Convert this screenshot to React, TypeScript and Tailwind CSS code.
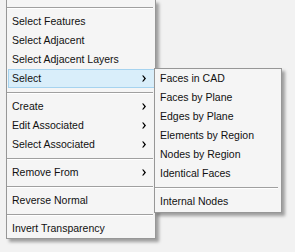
import React from 'react';

type Item = { label?: string; sub?: boolean; active?: boolean; sep?: boolean };

const mainItems: Item[] = [
    { sep: true },
    { label: 'Select Features' },
    { label: 'Select Adjacent' },
    { label: 'Select Adjacent Layers' },
    { label: 'Select', sub: true, active: true },
    { sep: true },
    { label: 'Create', sub: true },
    { label: 'Edit Associated', sub: true },
    { label: 'Select Associated', sub: true },
    { sep: true },
    { label: 'Remove From', sub: true },
    { sep: true },
    { label: 'Reverse Normal' },
    { sep: true },
    { label: 'Invert Transparency' },
];

const subItems: Item[] = [
    { label: 'Faces in CAD' },
    { label: 'Faces by Plane' },
    { label: 'Edges by Plane' },
    { label: 'Elements by Region' },
    { label: 'Nodes by Region' },
    { label: 'Identical Faces' },
    { sep: true },
    { label: 'Internal Nodes' },
];

function Arrow() {
    return (
        <svg width="4" height="7" viewBox="0 0 4 7" className="block">
            <polygon points="0,0.5 1.5,0.5 4,3.5 1.5,6.5 0,6.5 2.3,3.5" fill="#000" />
        </svg>
    );
}

function MenuRow({ item }: { item: Item }) {
    if (item.sep) {
        return (
            <div className="h-[9px] flex flex-col justify-start pt-[4px] pr-[2px]">
                <div className="h-px bg-[#a0a0a0]" />
                <div className="h-px bg-white" />
            </div>
        );
    }
    return (
        <div
            className={`h-[19px] ml-px flex items-center justify-between pl-[3px] pr-[8px] border ${
                item.active ? 'bg-[#d9eefa] border-[#a6d3ef]' : 'border-transparent'
            }`}
        >
            <span>{item.label}</span>
            {item.sub && <Arrow />}
        </div>
    );
}

export default function App() {
    return (
        <div
            className="relative w-[295px] h-[252px] overflow-hidden bg-[#f2f2f2] text-[10.5px] text-[#111]"
            style={{ fontFamily: '"Liberation Sans", Arial, sans-serif' }}
        >
            {/* Main context menu */}
            <div className="ml-[6px] w-[150px] pt-[3px] bg-[#f5f5f5] border-x border-b border-[#979797] shadow-[3px_3px_3px_rgba(0,0,0,0.35)]">
                {mainItems.map((it, i) => (
                    <MenuRow key={i} item={it} />
                ))}
            </div>

            {/* Select submenu */}
            <div className="absolute left-[154px] top-[68px] w-[128px] pb-px bg-[#f5f5f5] border border-[#979797] shadow-[3px_3px_3px_rgba(0,0,0,0.35)]">
                {subItems.map((it, i) =>
                    it.sep ? (
                        <div key={i} className="h-[9px] pt-[4px] pr-[3px]">
                            <div className="h-px bg-[#a0a0a0]" />
                            <div className="h-px bg-white" />
                        </div>
                    ) : (
                        <div key={i} className="h-[19px] flex items-center pl-[5px]">
                            {it.label}
                        </div>
                    )
                )}
            </div>
        </div>
    );
}
